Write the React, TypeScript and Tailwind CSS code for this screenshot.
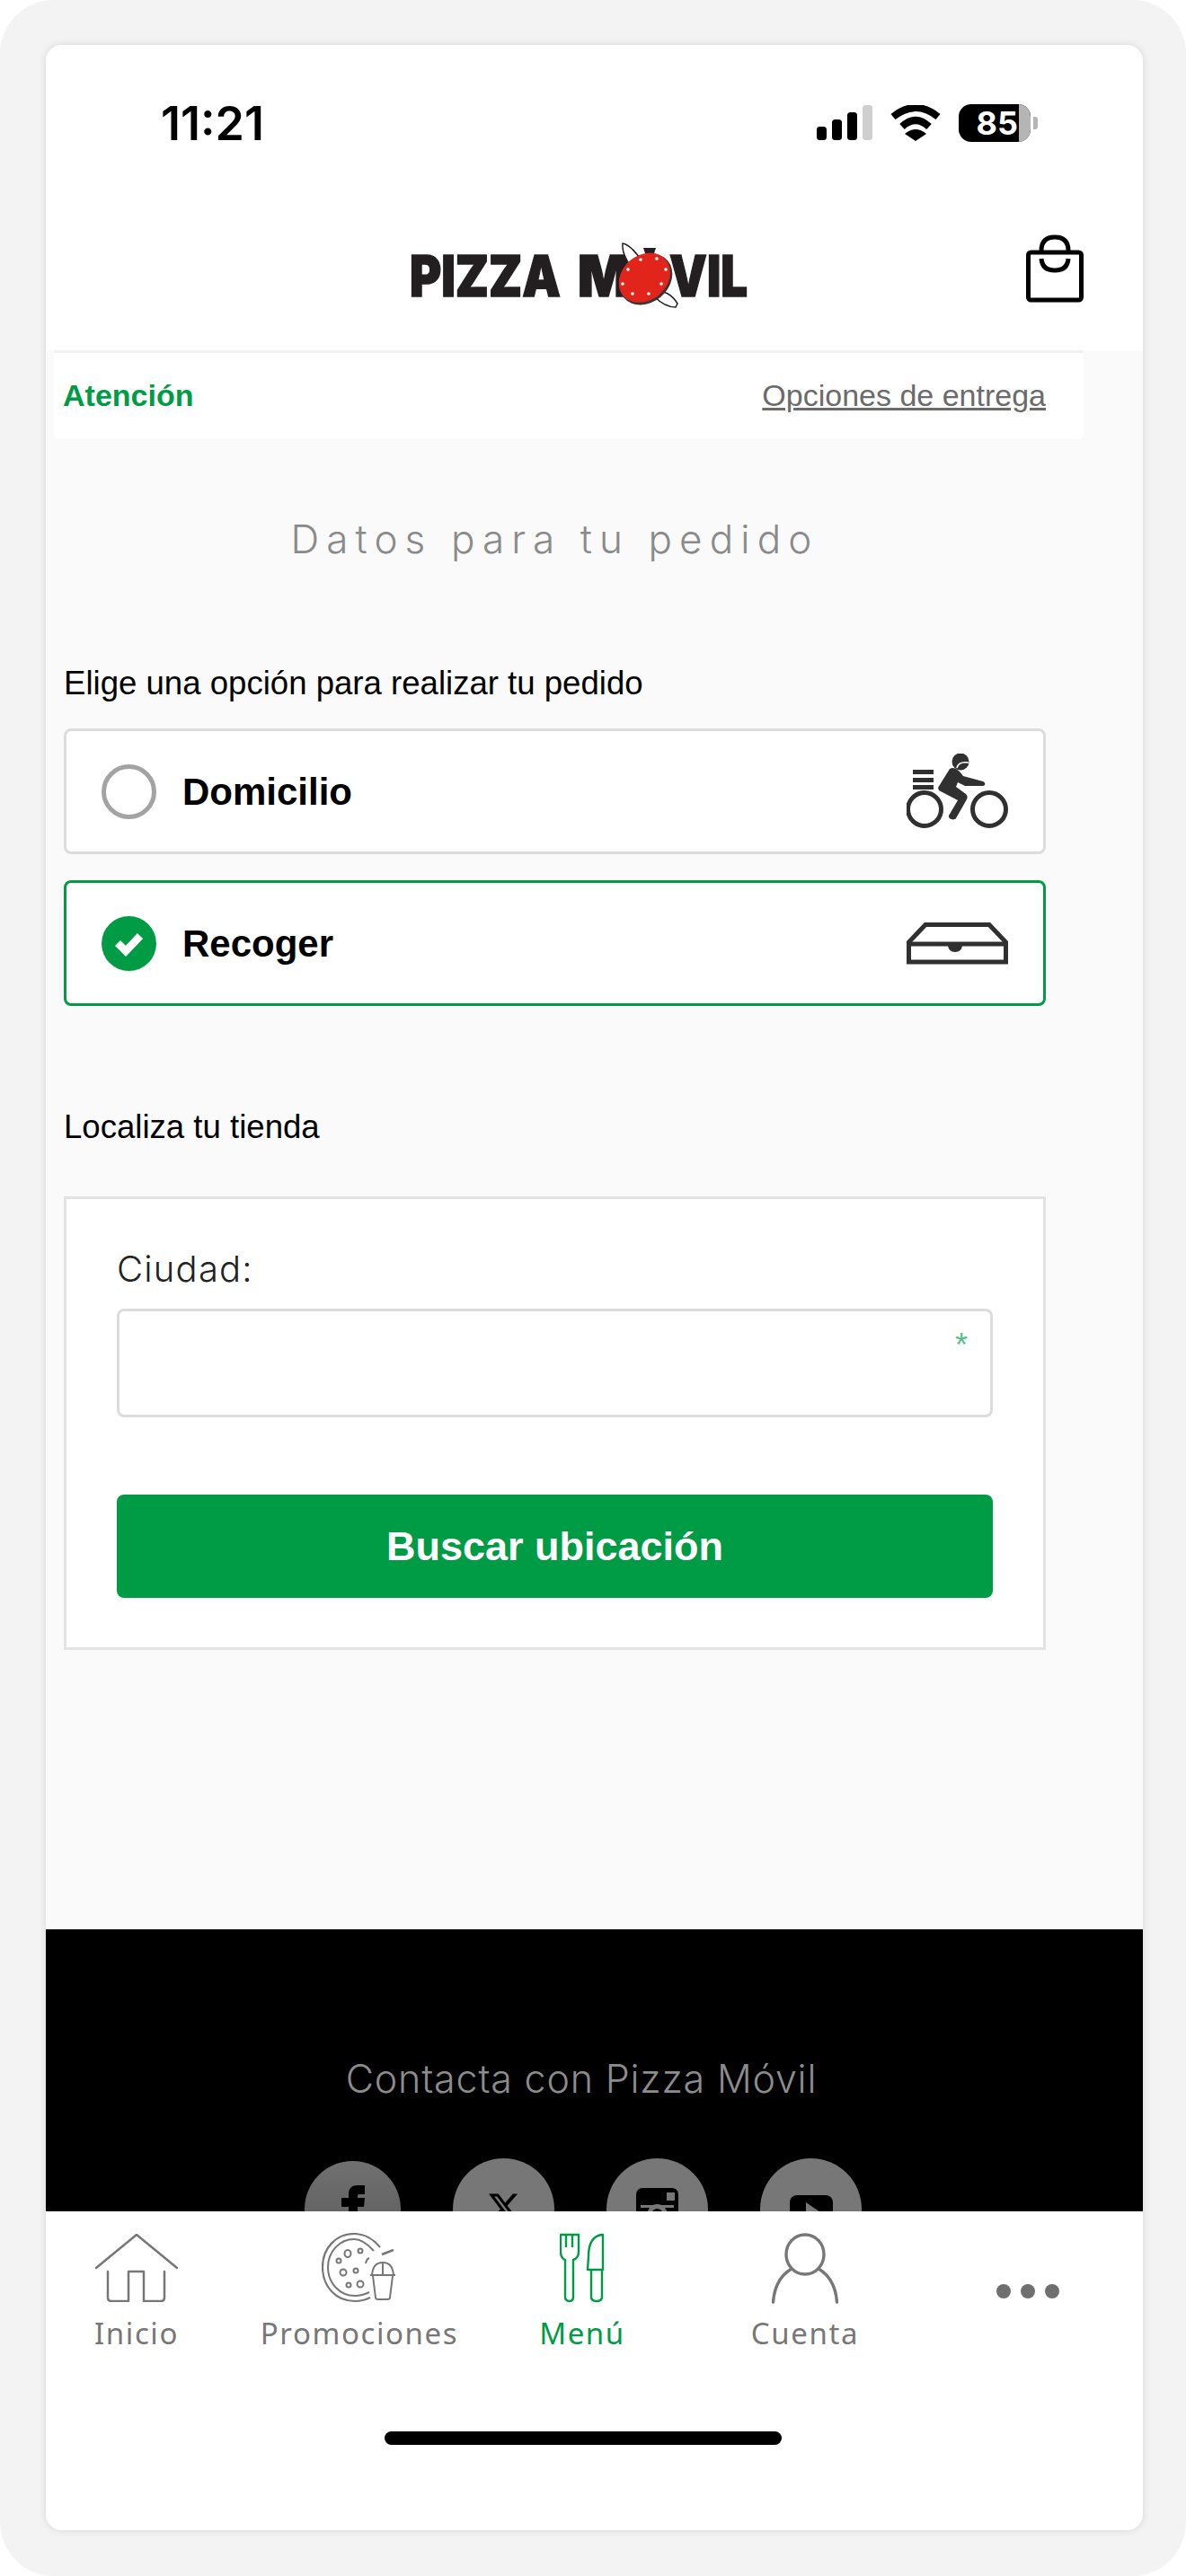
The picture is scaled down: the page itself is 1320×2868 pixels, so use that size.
import React from "react";
import { FaXTwitter } from "react-icons/fa6";

const Signal = () => (
  <svg width="62" height="40" viewBox="909 118 62 40" fill="#000">
    <rect x="909" y="142" width="11" height="15" rx="3.5" />
    <rect x="926" y="134" width="11" height="23" rx="3.5" />
    <rect x="943" y="126" width="11" height="31" rx="3.5" />
    <rect x="960" y="118" width="11" height="39" rx="3.5" fill="#cfcfcf" />
  </svg>
);

const Wifi = () => (
  <svg width="56" height="40" viewBox="0 0 56 40" fill="none">
    <path d="M3 13 Q28 -7 53 13" stroke="#000" strokeWidth="8" />
    <path d="M13 24 Q28 10 43 24" stroke="#000" strokeWidth="8" />
    <path d="M28 40 L16 32 Q28 22 40 32 Z" fill="#000" />
  </svg>
);

const Logo = () => (
  <svg width="376" height="72" viewBox="456 270 376 72" className="ml-[405px] mt-[8px] shrink-0 overflow-visible">
    <g fontFamily="Inter, 'Liberation Sans', sans-serif" fontWeight="900" fontSize="63" fill="#231f20" stroke="#231f20" strokeWidth="1.5">
      <text x="456" y="330" textLength="168" lengthAdjust="spacingAndGlyphs">PIZZA</text>
      <text x="643" y="330" textLength="58" lengthAdjust="spacingAndGlyphs">M</text>
      <text x="745" y="330" textLength="87" lengthAdjust="spacingAndGlyphs">VIL</text>
    </g>
    <path d="M693 271 C700 272 712 284 716 296 L706 302 C698 292 692 280 693 271 Z" fill="#fff" stroke="#231f20" strokeWidth="1.5" />
    <path d="M730 326 C738 322 748 328 754 338 L752 342 C742 342 734 336 728 330 Z" fill="#fff" stroke="#231f20" strokeWidth="1.5" />
    <path d="M716 276 L730 276 L728 282 L718 282 Z" fill="#231f20" />
    <g transform="rotate(-40 718 310)">
      <ellipse cx="718" cy="311" rx="32" ry="26" fill="#3a3536" />
      <ellipse cx="718" cy="309" rx="31" ry="25" fill="#e1251b" />
    </g>
    <g fill="#fff">
      <circle cx="713" cy="289" r="1.8" />
      <circle cx="731" cy="288" r="1.8" />
      <circle cx="699" cy="300" r="1.8" />
      <circle cx="741" cy="300" r="1.8" />
      <circle cx="693" cy="316" r="1.8" />
      <circle cx="736" cy="316" r="1.8" />
      <circle cx="704" cy="327" r="1.8" />
      <circle cx="722" cy="327" r="1.8" />
    </g>
  </svg>
);

const Bag = () => (
  <svg width="64" height="76" viewBox="1142 261 64 76" fill="none" stroke="#000" strokeWidth="5" className="ml-auto mr-[66px] -mt-px shrink-0">
    <rect x="1144.5" y="281" width="59" height="53" rx="3" />
    <path d="M1159 281 V279 Q1159 264 1174 264 Q1189 264 1189 279 V281" />
    <path d="M1159 288 Q1160 301 1174 301 Q1188 301 1189 288" />
  </svg>
);

const Bike = () => (
  <svg width="114" height="84" viewBox="1010 838 114 84" fill="#303030" className="shrink-0">
    <circle cx="1030" cy="900" r="18.5" fill="none" stroke="#303030" strokeWidth="5" />
    <circle cx="1102" cy="900" r="18.5" fill="none" stroke="#303030" strokeWidth="5" />
    <rect x="1017" y="856" width="23" height="5" />
    <rect x="1017" y="865" width="23" height="5" />
    <rect x="1017" y="873" width="23" height="5" />
    <path d="M1058 855 C1063 852 1068 856 1073 863 L1095 869 C1098 870 1098 874 1095 874 L1075 874 L1067 870 L1065 875 L1076 883 C1078 885 1078 887 1077 889 L1065 910 C1063 913 1056 911 1057 907 L1067 890 L1046 879 L1045 876 Z" />
    <circle cx="1070" cy="847" r="9.5" />
    <path d="M1066 854 C1067 849 1072 847 1079 848" fill="none" stroke="#fff" strokeWidth="1.6" />
  </svg>
);

const PizzaBox = () => (
  <svg width="114" height="48" viewBox="1010 1026 114 48" fill="none" stroke="#303030" strokeWidth="5" className="shrink-0">
    <path d="M1012.5 1071 V1049 L1031 1029.5 H1102 L1120.5 1049 V1071 Z" />
    <path d="M1012.5 1051 H1120.5" />
    <path d="M1056 1053 Q1057 1060 1064 1060 Q1071 1060 1072 1053 Z" fill="#303030" stroke="none" />
  </svg>
);

const Check = () => (
  <svg width="61" height="61" viewBox="0 0 61 61" className="shrink-0">
    <circle cx="30.5" cy="30.5" r="30.5" fill="#009b45" />
    <path d="M18 30 L27 39 L43 22" fill="none" stroke="#fff" strokeWidth="8.5" />
  </svg>
);

const Facebook = () => (
  <svg width="26" height="60" viewBox="0 0 26 60" fill="#000" className="mt-[27px]">
    <path d="M8 60 V24 H0 V14 H8 V10 C8 3 12 0 18 0 H26 V10 H20 C18 10 18 11 18 13 V14 H26 L25 24 H18 V60 Z" />
  </svg>
);

const Instagram = () => (
  <svg width="47" height="60" viewBox="0 0 47 60" className="mt-[33px]">
    <rect width="47" height="47" rx="7" fill="#000" />
    <rect x="34" y="5" width="9" height="9" fill="#777" />
    <rect x="5" y="19" width="37" height="3" fill="#777" />
    <circle cx="23.5" cy="29" r="11" fill="#777" />
    <circle cx="23.5" cy="29" r="6" fill="#000" />
  </svg>
);

const Youtube = () => (
  <svg width="48" height="40" viewBox="0 0 48 40" className="mt-[41px]">
    <rect width="48" height="40" rx="8" fill="#000" />
    <path d="M18 8 L34 19 L18 30 Z" fill="#777" />
  </svg>
);

const Home = () => (
  <svg width="92" height="76" viewBox="0 0 92 76" fill="none" stroke="#777" strokeWidth="2.5" strokeLinejoin="round" strokeLinecap="round">
    <path d="M1 38 L46 1 L91 38" />
    <path d="M14 42 V71 Q14 75 18 75 H37 V42 H54 V75 H73 Q77 75 77 71 V42" />
  </svg>
);

const Promo = () => (
  <svg width="84" height="78" viewBox="0 0 84 78" fill="none" stroke="#777" strokeWidth="2">
    <path d="M65 16 C56 5 46 1 36 1 C16 1 1 17 1 38 C1 60 16 76 37 76 C42 76 48 75 54 72" strokeWidth="2.2" />
    <path d="M58 20 C50 11 43 7 36 7 C20 7 7 21 7 38 C7 56 20 70 37 70 C42 70 47 69 53 66" />
    <ellipse cx="29" cy="23" rx="3.5" ry="4" />
    <ellipse cx="43" cy="20" rx="2.5" ry="2.5" />
    <ellipse cx="19" cy="31" rx="2.5" ry="2.5" />
    <ellipse cx="24" cy="44" rx="3.5" ry="3.5" />
    <ellipse cx="38" cy="42" rx="2.5" ry="2.5" />
    <ellipse cx="30" cy="58" rx="2.5" ry="2.5" />
    <ellipse cx="43" cy="57" rx="3.5" ry="3.5" />
    <path d="M49 34 Q50 29 53 28" />
    <path d="M67 24 L80 19" strokeWidth="2.5" />
    <path d="M56 47 Q57 33 68 33 Q79 33 80 47 Z" />
    <path d="M68 33 V47 M54 47 H82" />
    <path d="M57 48 L60 72 Q60 74 63 74 H73 Q76 74 76 72 L79 48" />
  </svg>
);

const Fork = () => (
  <svg width="50" height="78" viewBox="0 0 50 78" fill="none" stroke="#009b45" strokeWidth="2.4" strokeLinejoin="round">
    <path d="M1 2 H21 V21 Q21 28 15 30 V71 Q15 76 11 76 Q6 76 6 71 V30 Q1 28 1 21 Z" />
    <path d="M7 2 V16 M14 2 V16" />
    <path d="M47 2 Q32 4 32 26 L31 41 H48 V2 Z" />
    <path d="M35 41 V71 Q35 76 41 76 Q47 76 47 71 V41" />
  </svg>
);

const Person = () => (
  <svg width="74" height="79" viewBox="0 0 74 79" fill="none" stroke="#777" strokeWidth="3.4" strokeLinecap="round">
    <ellipse cx="37" cy="24" rx="21" ry="22" />
    <path d="M1.5 77 C3 58 10 47 22 40 M72.5 77 C71 58 64 47 52 40" />
  </svg>
);

const Dots = () => (
  <div className="flex gap-[11px] h-[16px]">
    <div className="w-[16px] h-[16px] rounded-full bg-[#6f6f6f]" />
    <div className="w-[16px] h-[16px] rounded-full bg-[#6f6f6f]" />
    <div className="w-[16px] h-[16px] rounded-full bg-[#6f6f6f]" />
  </div>
);

const NavItem = ({ label, active, children }: { label: string; active?: boolean; children: React.ReactNode }) => (
  <div className="w-[248px] flex flex-col items-center">
    <div className="h-[78px] flex items-center justify-center">{children}</div>
    <div className={`mt-[12px] h-[44px] leading-[44px] text-[33px] tracking-[1.6px] font-['Noto_Sans',sans-serif] ${active ? "text-[#009b45]" : "text-[#777777]"}`}>
      {label}
    </div>
  </div>
);

const Option = ({ label, selected, icon }: { label: string; selected?: boolean; icon: React.ReactNode }) => (
  <div className={`h-[140px] bg-white rounded-[8px] border-[3px] flex items-center pl-[39px] pr-[38px] ${selected ? "border-[#009b45]" : "border-[#dcdcdc]"}`}>
    {selected ? <Check /> : <div className="w-[61px] h-[61px] rounded-full border-[5px] border-[#a3a3a3] shrink-0" />}
    <div className="ml-[29px] text-[42px] font-bold text-black">{label}</div>
    <div className="ml-auto">{icon}</div>
  </div>
);

export default function App() {
  return (
    <div className="w-[1320px] h-[2868px] bg-white overflow-hidden">
      <div className="w-[1320px] h-[2868px] bg-[#f3f3f3] rounded-[60px] pt-[50px] pl-[51px]">
        <div className="w-[1221px] h-[2767px] rounded-[18px] overflow-hidden bg-[#fafafa] shadow-[0_0_8px_rgba(0,0,0,0.12)] flex flex-col font-['Liberation_Sans',Arial,sans-serif]">
          <div className="h-[340px] bg-white shrink-0">
            <div className="flex h-[42px] mt-[66px] items-center">
              <div className="ml-[128px] mt-[2px] text-[52px] leading-[42px] font-semibold text-black font-['Inter',sans-serif]">11:21</div>
              <div className="ml-auto flex items-center">
                <Signal />
                <div className="ml-[20px]"><Wifi /></div>
                <div className="ml-[20px] w-[80px] h-[42px] rounded-[14px] overflow-hidden bg-black flex">
                  <div className="w-[67px] text-white text-[36px] leading-[42px] font-bold text-right pr-[1px] font-['Inter',sans-serif]">85</div>
                  <div className="w-[13px] bg-[#b5b5b5]" />
                </div>
                <div className="ml-[3px] mr-[117px] w-[5px] h-[14px] rounded-r-[3px] bg-[#b5b5b5]" />
              </div>
            </div>
            <div className="flex items-start h-[80px] mt-[104px]">
              <Logo />
              <Bag />
            </div>
          </div>

          <div className="ml-[9px] w-[1146px] h-[99px] shrink-0 bg-white border-t-[3px] border-[#f1f1f1] rounded-b-[6px] flex items-center justify-between pl-[10px] pr-[42px]">
            <span className="text-[#009b45] font-bold text-[34px] -mt-[2px]">Atención</span>
            <span className="text-[#6b6b6b] text-[34px] underline -mt-[2px]">Opciones de entrega</span>
          </div>

          <div className="w-[1093px] ml-[20px] shrink-0">
            <div className="mt-[81px] h-[60px] leading-[60px] text-center text-[#8a8a8a] text-[44px] font-light tracking-[8.1px] font-['Inter',sans-serif]">
              Datos para tu pedido
            </div>
            <div className="mt-[111px] h-[40px] leading-[40px] text-[36.6px] text-black">Elige una opción para realizar tu pedido</div>
            <div className="mt-[30px] flex flex-col gap-[29px]">
              <Option label="Domicilio" icon={<Bike />} />
              <Option label="Recoger" selected icon={<PizzaBox />} />
            </div>
            <div className="mt-[115px] h-[40px] leading-[40px] text-[36.6px] text-black">Localiza tu tienda</div>
            <div className="mt-[57px] h-[505px] bg-white border-[3px] border-[#e3e3e3] px-[56px] pt-[58px]">
              <div className="h-[40px] leading-[40px] text-[40px] text-[#222] tracking-[1.2px] font-['Inter',sans-serif] font-light">Ciudad:</div>
              <div className="relative mt-[24px] h-[121px] border-[3px] border-[#dcdcdc] rounded-[8px] bg-white">
                <span className="absolute right-[25px] top-[18px] text-[#55c08a] text-[36px] leading-[40px]">*</span>
              </div>
              <div className="mt-[86px] h-[115px] rounded-[8px] bg-[#009b45] flex items-center justify-center text-white font-bold text-[45px]">
                Buscar ubicación
              </div>
            </div>
          </div>

          <div className="mt-[311px] h-[314px] bg-black overflow-hidden shrink-0">
            <div className="mt-[136px] w-[1192px] h-[60px] leading-[60px] text-center text-[#8c8c8c] text-[43px] font-light font-['Inter',sans-serif] tracking-[0.8px]">
              Contacta con Pizza Móvil
            </div>
            <div className="mt-[59px] pl-[288px] flex items-start gap-[58px]">
              <div className="mt-[3px] w-[107px] h-[107px] rounded-full bg-gradient-to-b from-[#707070] to-[#5a5a5a] flex justify-center shrink-0"><Facebook /></div>
              <div className="w-[113px] h-[113px] rounded-full bg-[#777777] flex justify-center shrink-0">
                <FaXTwitter className="mt-[36px] text-black" size={38} />
              </div>
              <div className="w-[113px] h-[113px] rounded-full bg-[#777777] flex justify-center shrink-0"><Instagram /></div>
              <div className="w-[113px] h-[113px] rounded-full bg-[#777777] flex justify-center shrink-0"><Youtube /></div>
            </div>
          </div>

          <div className="flex-1 bg-white flex flex-col items-start">
            <div className="flex -ml-[23px] mt-[24px]">
              <NavItem label="Inicio"><Home /></NavItem>
              <NavItem label="Promociones"><Promo /></NavItem>
              <NavItem label="Menú" active><Fork /></NavItem>
              <NavItem label="Cuenta"><Person /></NavItem>
              <div className="w-[248px] flex justify-center pt-[57px]"><Dots /></div>
            </div>
            <div className="mt-[87px] ml-[377px] w-[442px] h-[15px] rounded-full bg-black" />
          </div>
        </div>
      </div>
    </div>
  );
}
